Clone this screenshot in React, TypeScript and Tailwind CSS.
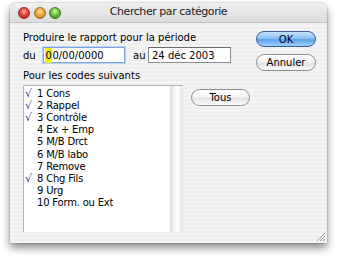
import React from "react";

const CODES = [
  { label: "1 Cons", checked: true },
  { label: "2 Rappel", checked: true },
  { label: "3 Contrôle", checked: true },
  { label: "4 Ex + Emp", checked: false },
  { label: "5 M/B Drct", checked: false },
  { label: "6 M/B labo", checked: false },
  { label: "7 Remove", checked: false },
  { label: "8 Chg Fils", checked: true },
  { label: "9 Urg", checked: false },
  { label: "10 Form. ou Ext", checked: false },
];

const FONT = "font-['Lucida_Grande','DejaVu_Sans',sans-serif]";

function Light({ color }: { color: "red" | "orange" | "green" }) {
  const cls = {
    red: "bg-[radial-gradient(circle_at_50%_35%,#ffb0a8_0%,#e8453c_45%,#a81c14_100%)] border-[#8a2a24]",
    orange: "bg-[radial-gradient(circle_at_50%_35%,#ffe3a0_0%,#f2a93a_45%,#b86a0c_100%)] border-[#9a6a20]",
    green: "bg-[radial-gradient(circle_at_50%_35%,#d4f7a8_0%,#6cc43c_45%,#2f8a14_100%)] border-[#3c7a24]",
  }[color];
  return <div className={`w-[12px] h-[12px] rounded-full border ${cls}`} />;
}

function PillButton({ label, primary, className }: { label: string; primary?: boolean; className?: string }) {
  return (
    <div
      className={`flex items-center justify-center rounded-full border text-[10px] ${
        primary
          ? "border-[#3a5f95] bg-[linear-gradient(180deg,#c6e2fb_0%,#8cc2f4_45%,#5ba2ec_55%,#9fd2fb_100%)]"
          : "border-[#8c8c8c] bg-[linear-gradient(180deg,#ffffff_0%,#f4f4f4_45%,#e2e2e2_55%,#fbfbfb_100%)]"
      } ${className ?? ""}`}
    >
      {label}
    </div>
  );
}

export default function App() {
  return (
    <div className={`w-[339px] h-[263px] bg-white pl-[10px] pt-[3px] ${FONT} text-black`}>
      <div className="w-[317px] h-[240px] rounded-t-[6px] flex flex-col overflow-hidden shadow-[0_5px_9px_rgba(0,0,0,0.45),0_0_2px_rgba(0,0,0,0.35)]">
        {/* Title bar */}
        <div className="relative h-[20px] flex items-center pl-[8px] gap-[3.5px] bg-[linear-gradient(180deg,#eeeeee_0%,#dcdcdc_100%)] border-b border-[#c4c4c4]">
          <Light color="red" />
          <Light color="orange" />
          <Light color="green" />
          <div className="absolute inset-0 flex items-center justify-center text-[11px] tracking-[-0.45px] text-[#222]">
            Chercher par catégorie
          </div>
        </div>

        {/* Body */}
        <div className="flex-1 flex flex-col pl-[13px] pr-[11px] pt-[8px] bg-[repeating-linear-gradient(180deg,#eeeeee_0px,#eeeeee_2px,#f4f4f4_2px,#f4f4f4_4px)] relative">
          <div className="flex">
            <div className="flex-1 flex flex-col text-[10px]">
              <div className="leading-[13px]">Produire le rapport pour la période</div>
              <div className="flex items-center mt-[3px] h-[16px]">
                <span className="w-[20px]">du</span>
                <div className="w-[82px] h-[16px] bg-white border border-[#7ea6dc] shadow-[0_0_0_1px_#b8d2f2] flex items-center pl-[1px]">
                  <span className="bg-[#f5f000] px-[0.5px]">0</span>
                  <span>0/00/0000</span>
                </div>
                <span className="ml-[8px] w-[15px]">au</span>
                <div className="w-[83px] h-[16px] bg-white border border-[#8e8e8e] border-t-[#6a6a6a] flex items-center pl-[3px]">
                  24 déc 2003
                </div>
              </div>
              <div className="leading-[13px] mt-[6px]">Pour les codes suivants</div>
            </div>
            <div className="flex flex-col w-[60px]">
              <PillButton label="OK" primary className="h-[16px]" />
              <PillButton label="Annuler" className="h-[17px] mt-[7px]" />
            </div>
          </div>

          <div className="flex mt-[3px]">
            <div className="w-[160px] h-[147px] flex border-t border-l border-[#b4b4b4]">
              <div className="flex-1 bg-white pt-[2px] text-[10px] tracking-[-0.2px]">
                {CODES.map((c) => (
                  <div key={c.label} className="flex items-center h-[12.1px] leading-[12px]">
                    <span className="w-[13px] pl-[1px] text-[#4a4a9c] text-[11px]">{c.checked ? "√" : ""}</span>
                    <span>{c.label}</span>
                  </div>
                ))}
              </div>
              <div className="w-[13px] bg-[linear-gradient(90deg,#d8d8d8_0%,#f0f0f0_30%,#ffffff_55%,#e6e6e6_100%)]" />
            </div>
            <PillButton label="Tous" className="w-[59px] h-[17px] ml-[8px] mt-[4px]" />
          </div>

          {/* resize grip */}
          <svg className="absolute right-[1px] bottom-[1px]" width="11" height="11" viewBox="0 0 11 11">
            <path d="M10 2 L2 10 M10 5 L5 10 M10 8 L8 10" stroke="#9a9a9a" strokeWidth="1" />
            <path d="M10 3 L3 10 M10 6 L6 10" stroke="#ffffff" strokeWidth="1" />
          </svg>
        </div>
      </div>
    </div>
  );
}
